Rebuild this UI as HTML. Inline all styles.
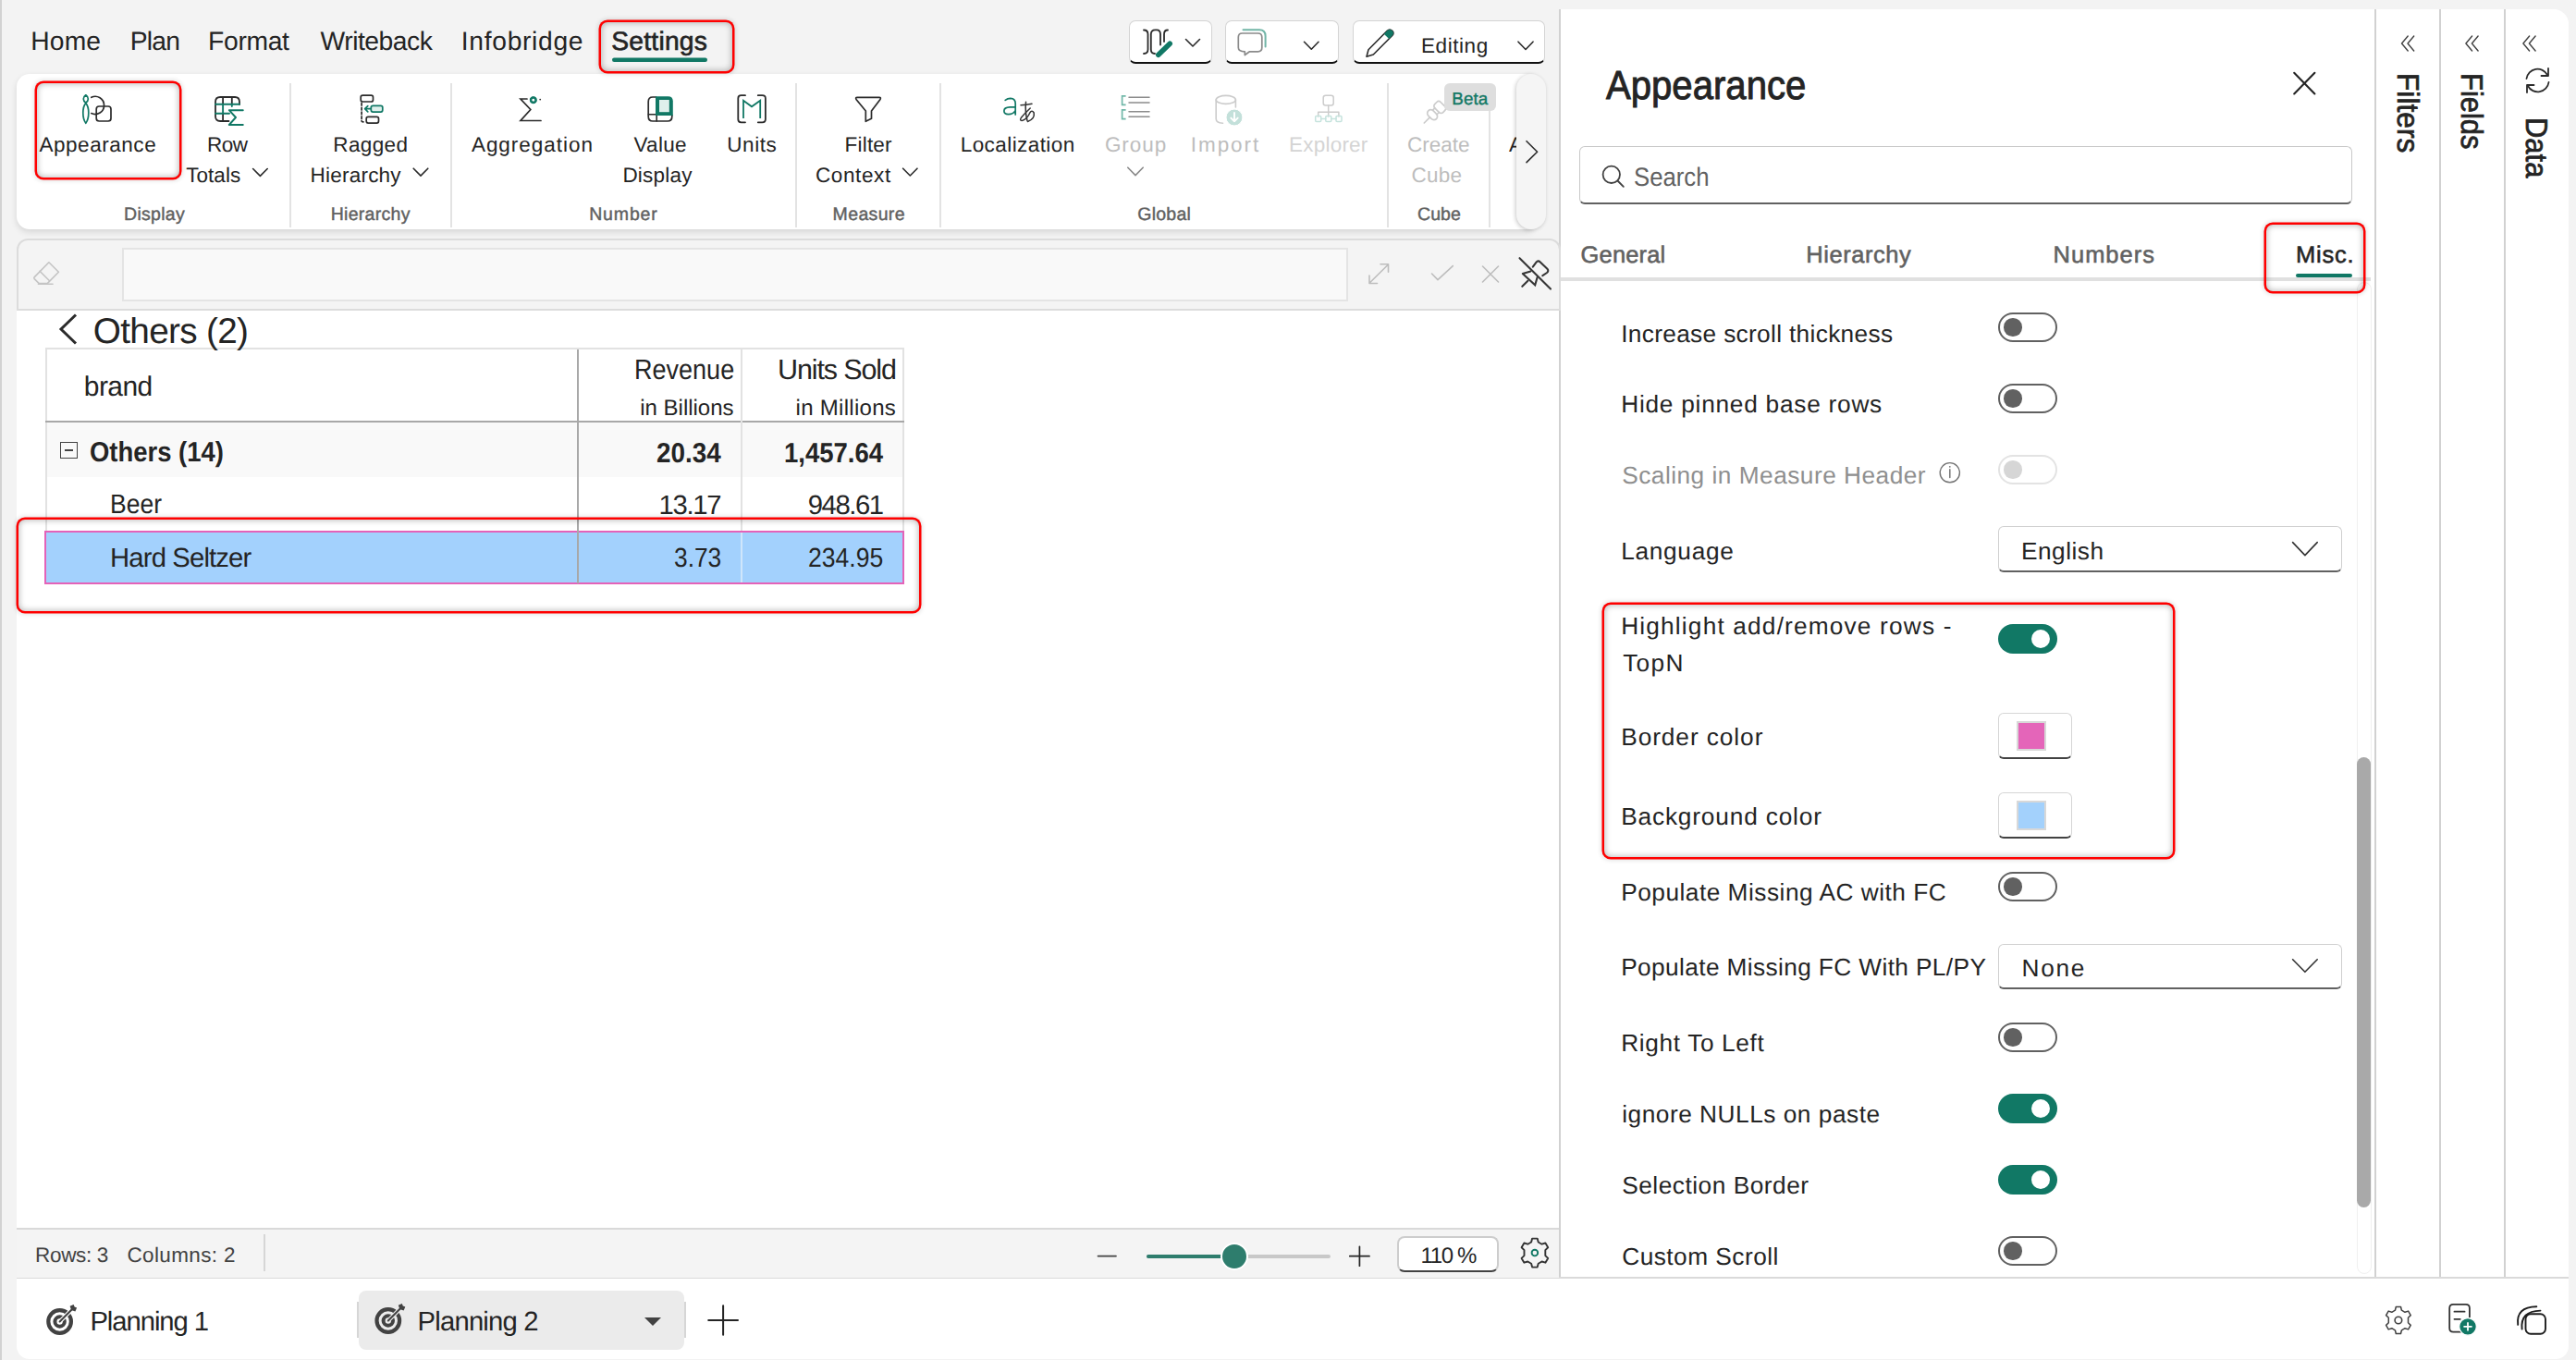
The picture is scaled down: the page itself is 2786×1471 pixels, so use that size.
<!DOCTYPE html>
<html><head><meta charset="utf-8"><style>
html,body{margin:0;padding:0;}
body{width:2786px;height:1471px;overflow:hidden;position:relative;background:#f3f3f3;font-family:"Liberation Sans",sans-serif;color:#242424;}
.a{position:absolute;box-sizing:border-box;}
.t{position:absolute;white-space:nowrap;line-height:1;text-rendering:geometricPrecision;}
</style></head><body>
<!-- window frame -->
<div class="a" style="left:0;top:0;width:2px;height:1471px;background:#d2d2d2"></div>
<!-- right panel bg -->
<div class="a" style="left:1686px;top:10px;width:1092px;height:1373px;background:#fff;border-top-right-radius:16px;border-left:2px solid #d1d1d1"></div>
<div class="a" style="left:2568px;top:10px;width:2px;height:1373px;background:#d1d1d1"></div>
<div class="a" style="left:2638px;top:10px;width:2px;height:1373px;background:#d1d1d1"></div>
<div class="a" style="left:2708px;top:10px;width:2px;height:1373px;background:#d1d1d1"></div>
<!-- bottom tab bar -->
<div class="a" style="left:18px;top:1381px;width:2760px;height:89px;background:#fff;border-top:2px solid #dadada;border-bottom-left-radius:14px;border-bottom-right-radius:14px"></div>
<!-- ribbon -->
<div class="a" style="left:18px;top:80px;width:1638px;height:168px;background:#fff;border-radius:14px 0 0 14px;box-shadow:0 3px 7px rgba(0,0,0,0.12)"></div>
<div class="a" style="left:1640px;top:80px;width:32px;height:168px;background:#f5f5f5;border-radius:16px;box-shadow:-1px 1px 4px rgba(0,0,0,0.22);z-index:5"></div>
<div class="a" style="left:313px;top:90px;width:2px;height:156px;background:#e3e3e3"></div>
<div class="a" style="left:487px;top:90px;width:2px;height:156px;background:#e3e3e3"></div>
<div class="a" style="left:860px;top:90px;width:2px;height:156px;background:#e3e3e3"></div>
<div class="a" style="left:1016px;top:90px;width:2px;height:156px;background:#e3e3e3"></div>
<div class="a" style="left:1500px;top:90px;width:2px;height:156px;background:#e3e3e3"></div>
<div class="a" style="left:1610px;top:90px;width:2px;height:156px;background:#e3e3e3"></div>
<div class="a" style="left:1562px;top:90px;width:56px;height:30px;background:#dedede;border-radius:6px;z-index:7"></div>
<!-- top buttons -->
<div class="a" style="left:1221px;top:22px;width:90px;height:47px;background:#fff;border:1.5px solid #d4d4d4;border-bottom:2.5px solid #111;border-radius:7px"></div>
<div class="a" style="left:1325px;top:22px;width:123px;height:47px;background:#fff;border:1.5px solid #d4d4d4;border-bottom:2.5px solid #111;border-radius:7px"></div>
<div class="a" style="left:1463px;top:22px;width:208px;height:47px;background:#fff;border:1.5px solid #d4d4d4;border-bottom:2.5px solid #111;border-radius:7px"></div>
<!-- formula bar -->
<div class="a" style="left:18px;top:258px;width:1670px;height:78px;background:#f4f4f4;border:2px solid #dcdcdc;border-radius:12px 12px 0 0"></div>
<div class="a" style="left:132px;top:268px;width:1326px;height:58px;background:#f9f9f9;border:2px solid #e4e4e4"></div>
<!-- grid area -->
<div class="a" style="left:18px;top:336px;width:1668px;height:992px;background:#fff"></div>
<!-- table -->
<div class="a" style="left:49px;top:376px;width:929px;height:2px;background:#e2e2e2"></div>
<div class="a" style="left:49px;top:376px;width:2px;height:198px;background:#e2e2e2"></div>
<div class="a" style="left:976px;top:376px;width:2px;height:198px;background:#e2e2e2"></div>
<div class="a" style="left:49px;top:455px;width:929px;height:2px;background:#a8a8a8"></div>
<div class="a" style="left:51px;top:457px;width:925px;height:59px;background:#f9f9f9"></div>
<div class="a" style="left:801px;top:378px;width:2px;height:253px;background:#e2e2e2"></div>
<div class="a" style="left:48px;top:574px;width:930px;height:58px;background:#a3d1fd;border:2px solid #e462b8"></div>
<div class="a" style="left:801px;top:576px;width:2px;height:54px;background:#cfe6fb"></div>
<div class="a" style="left:624px;top:378px;width:2px;height:253px;background:#a8a8a8"></div>
<div class="a" style="left:65px;top:478px;width:19px;height:18px;border:1.5px solid #424242"></div>
<div class="a" style="left:70px;top:486px;width:9px;height:1.5px;background:#424242"></div>
<!-- status bar -->
<div class="a" style="left:18px;top:1328px;width:1668px;height:54px;background:#f4f4f4;border-top:2px solid #d9d9d9"></div>
<div class="a" style="left:285px;top:1335px;width:2px;height:40px;background:#d6d6d6"></div>
<div class="a" style="left:1240px;top:1357px;width:199px;height:4px;background:#c8c8c8;border-radius:2px"></div>
<div class="a" style="left:1240px;top:1357px;width:95px;height:4px;background:#2e7d6d;border-radius:2px"></div>
<div class="a" style="left:1319.7px;top:1343.6px;width:30px;height:30px;background:#2e7d6d;border:2px solid #fff;border-radius:50%"></div>
<div class="a" style="left:1511px;top:1336.5px;width:110px;height:39.5px;background:#fff;border:2px solid #cdcdcd;border-bottom:2px solid #424242;border-radius:8px"></div>
<!-- bottom tabs -->
<div class="a" style="left:386px;top:1408px;width:2px;height:39px;background:#d6d6d6"></div>
<div class="a" style="left:740px;top:1408px;width:2px;height:39px;background:#d6d6d6"></div>
<div class="a" style="left:388px;top:1396px;width:352px;height:64px;background:#ebebeb;border-radius:8px"></div>
<!-- right panel content -->
<div class="a" style="left:1708px;top:158px;width:836px;height:63px;background:#fff;border:1.5px solid #c8c8c8;border-bottom:2px solid #616161;border-radius:6px"></div>
<div class="a" style="left:1688px;top:300px;width:876px;height:4px;background:#e0e0e0"></div>
<div class="a" style="left:2483px;top:296px;width:61px;height:4px;background:#117865;border-radius:2px"></div>
<!-- scrollbar -->
<div class="a" style="left:2549px;top:305px;width:16px;height:1073px;border:1px solid #f0f0f0;border-radius:8px"></div>
<div class="a" style="left:2549px;top:818.7px;width:15px;height:487px;background:#a9a9a9;border-radius:7.5px"></div>
<!-- toggles -->
<div class="a" style="left:2161px;top:338px;width:64px;height:32px;border:2px solid #616161;border-radius:16px"></div>
<div class="a" style="left:2167.3px;top:344.3px;width:19.4px;height:19.4px;background:#616161;border-radius:50%"></div>
<div class="a" style="left:2161px;top:415px;width:64px;height:32px;border:2px solid #616161;border-radius:16px"></div>
<div class="a" style="left:2167.3px;top:421.3px;width:19.4px;height:19.4px;background:#616161;border-radius:50%"></div>
<div class="a" style="left:2161px;top:492px;width:64px;height:32px;border:2px solid #e3e3e3;border-radius:16px"></div>
<div class="a" style="left:2167.3px;top:498.3px;width:19.4px;height:19.4px;background:#d6d6d6;border-radius:50%"></div>
<div class="a" style="left:2161px;top:675px;width:64px;height:32px;background:#117865;border-radius:16px"></div>
<div class="a" style="left:2197px;top:681px;width:20px;height:20px;background:#fff;border-radius:50%"></div>
<div class="a" style="left:2161px;top:943px;width:64px;height:32px;border:2px solid #616161;border-radius:16px"></div>
<div class="a" style="left:2167.3px;top:949.3px;width:19.4px;height:19.4px;background:#616161;border-radius:50%"></div>
<div class="a" style="left:2161px;top:1106px;width:64px;height:32px;border:2px solid #616161;border-radius:16px"></div>
<div class="a" style="left:2167.3px;top:1112.3px;width:19.4px;height:19.4px;background:#616161;border-radius:50%"></div>
<div class="a" style="left:2161px;top:1183px;width:64px;height:32px;background:#117865;border-radius:16px"></div>
<div class="a" style="left:2197px;top:1189px;width:20px;height:20px;background:#fff;border-radius:50%"></div>
<div class="a" style="left:2161px;top:1260px;width:64px;height:32px;background:#117865;border-radius:16px"></div>
<div class="a" style="left:2197px;top:1266px;width:20px;height:20px;background:#fff;border-radius:50%"></div>
<div class="a" style="left:2161px;top:1337px;width:64px;height:32px;border:2px solid #616161;border-radius:16px"></div>
<div class="a" style="left:2167.3px;top:1343.3px;width:19.4px;height:19.4px;background:#616161;border-radius:50%"></div>
<!-- dropdowns -->
<div class="a" style="left:2161px;top:569px;width:372px;height:50px;background:#fff;border:1.5px solid #d0d0d0;border-bottom:2px solid #616161;border-radius:6px"></div>
<div class="a" style="left:2161px;top:1021px;width:372px;height:49px;background:#fff;border:1.5px solid #d0d0d0;border-bottom:2px solid #616161;border-radius:6px"></div>
<!-- color buttons -->
<div class="a" style="left:2161px;top:771px;width:80px;height:50px;background:#fff;border:1.5px solid #d6d6d6;border-bottom:2px solid #424242;border-radius:6px"></div>
<div class="a" style="left:2180.7px;top:780px;width:32.3px;height:32px;background:#e465b9;border:2px solid #d8d8d8"></div>
<div class="a" style="left:2161px;top:857px;width:80px;height:50px;background:#fff;border:1.5px solid #d6d6d6;border-bottom:2px solid #424242;border-radius:6px"></div>
<div class="a" style="left:2180.7px;top:866px;width:32.3px;height:32px;background:#a3d1fc;border:2px solid #d8d8d8"></div>
<!-- red annotation boxes -->
<div class="a" style="left:649.9px;top:23.6px;width:142.5px;height:53.5px;border-radius:7px;z-index:4;box-shadow:0 0 0 2.5px #f00,0 0 4px 3.5px rgba(0,0,0,0.10),inset 0 0 6px 1px rgba(0,0,0,0.26)"></div>
<div class="a" style="left:39.6px;top:90.3px;width:154.8px;height:102.0px;border-radius:7px;z-index:4;box-shadow:0 0 0 2.5px #f00,0 0 4px 3.5px rgba(0,0,0,0.10),inset 0 0 6px 1px rgba(0,0,0,0.26)"></div>
<div class="a" style="left:20.0px;top:561.5px;width:974.2px;height:99.8px;border-radius:7px;z-index:4;box-shadow:0 0 0 2.5px #f00,0 0 4px 3.5px rgba(0,0,0,0.10),inset 0 0 6px 1px rgba(0,0,0,0.26)"></div>
<div class="a" style="left:2450.5px;top:243.4px;width:105.4px;height:71.7px;border-radius:7px;z-index:4;box-shadow:0 0 0 2.5px #f00,0 0 4px 3.5px rgba(0,0,0,0.10),inset 0 0 6px 1px rgba(0,0,0,0.26)"></div>
<div class="a" style="left:1735.1px;top:654.0px;width:615.4px;height:272.9px;border-radius:7px;z-index:4;box-shadow:0 0 0 2.5px #f00,0 0 4px 3.5px rgba(0,0,0,0.10),inset 0 0 6px 1px rgba(0,0,0,0.26)"></div>

<div class="t" style="left:33.2px;top:30.0px;font-size:28.25px;letter-spacing:0.18px;">Home</div>
<div class="t" style="left:140.7px;top:30.0px;font-size:28.25px;letter-spacing:-0.78px;">Plan</div>
<div class="t" style="left:225.1px;top:30.0px;font-size:28.25px;letter-spacing:-0.34px;">Format</div>
<div class="t" style="left:346.5px;top:30.0px;font-size:28.25px;letter-spacing:-0.46px;">Writeback</div>
<div class="t" style="left:498.8px;top:30.0px;font-size:28.25px;letter-spacing:0.68px;">Infobridge</div>
<div class="t" style="left:661.3px;top:30.0px;font-size:28.25px;-webkit-text-stroke:0.62px currentColor;letter-spacing:0.22px;">Settings</div>
<div class="t" style="left:1537.0px;top:39.0px;font-size:22.5px;letter-spacing:0.57px;">Editing</div>
<div class="t" style="left:42.4px;top:146.0px;font-size:22.5px;letter-spacing:0.55px;">Appearance</div>
<div class="t" style="left:224.0px;top:146.0px;font-size:22.5px;letter-spacing:-0.53px;">Row</div>
<div class="t" style="left:201.2px;top:179.0px;font-size:22.5px;letter-spacing:0.05px;">Totals</div>
<div class="t" style="left:360.3px;top:146.0px;font-size:22.5px;letter-spacing:0.36px;">Ragged</div>
<div class="t" style="left:335.5px;top:179.0px;font-size:22.5px;letter-spacing:0.23px;">Hierarchy</div>
<div class="t" style="left:509.9px;top:146.0px;font-size:22.5px;letter-spacing:0.98px;">Aggregation</div>
<div class="t" style="left:685.5px;top:146.0px;font-size:22.5px;letter-spacing:0.28px;">Value</div>
<div class="t" style="left:673.4px;top:179.0px;font-size:22.5px;letter-spacing:0.23px;">Display</div>
<div class="t" style="left:786.2px;top:146.0px;font-size:22.5px;letter-spacing:0.60px;">Units</div>
<div class="t" style="left:913.6px;top:146.0px;font-size:22.5px;letter-spacing:0.18px;">Filter</div>
<div class="t" style="left:881.9px;top:179.0px;font-size:22.5px;letter-spacing:0.63px;">Context</div>
<div class="t" style="left:1038.7px;top:146.0px;font-size:22.5px;letter-spacing:0.43px;">Localization</div>
<div class="t" style="left:1194.9px;top:146.0px;font-size:22.5px;color:#bdbdbd;letter-spacing:0.94px;">Group</div>
<div class="t" style="left:1287.8px;top:146.0px;font-size:22.5px;color:#bdbdbd;letter-spacing:1.94px;">Import</div>
<div class="t" style="left:1394.0px;top:146.0px;font-size:22.5px;color:#d4d4d4;letter-spacing:0.22px;">Explorer</div>
<div class="t" style="left:1522.0px;top:146.0px;font-size:22.5px;color:#bdbdbd;">Create</div>
<div class="t" style="left:1526.6px;top:179.0px;font-size:22.5px;color:#bdbdbd;letter-spacing:0.24px;">Cube</div>
<div class="t" style="left:1632.0px;top:146.0px;font-size:22.5px;">A</div>
<div class="t" style="left:134.0px;top:223.0px;font-size:19.5px;-webkit-text-stroke:0.43px currentColor;color:#616161;letter-spacing:0.30px;">Display</div>
<div class="t" style="left:357.7px;top:223.0px;font-size:19.5px;-webkit-text-stroke:0.43px currentColor;color:#616161;letter-spacing:0.29px;">Hierarchy</div>
<div class="t" style="left:637.2px;top:223.0px;font-size:19.5px;-webkit-text-stroke:0.43px currentColor;color:#616161;letter-spacing:0.85px;">Number</div>
<div class="t" style="left:900.6px;top:223.0px;font-size:19.5px;-webkit-text-stroke:0.43px currentColor;color:#616161;letter-spacing:0.35px;">Measure</div>
<div class="t" style="left:1230.3px;top:223.0px;font-size:19.5px;-webkit-text-stroke:0.43px currentColor;color:#616161;letter-spacing:0.23px;">Global</div>
<div class="t" style="left:1533.0px;top:223.0px;font-size:19.5px;-webkit-text-stroke:0.43px currentColor;color:#616161;letter-spacing:0.08px;">Cube</div>
<div class="t" style="left:1570.3px;top:98.0px;font-size:18.75px;-webkit-text-stroke:0.41px currentColor;color:#117865;letter-spacing:0.09px;z-index:8;">Beta</div>
<div class="t" style="left:100.8px;top:340.0px;font-size:38.75px;letter-spacing:-0.70px;">Others (2)</div>
<div class="t" style="left:90.8px;top:404.0px;font-size:30.0px;letter-spacing:-0.59px;">brand</div>
<div class="t" style="left:685.9px;top:385.0px;font-size:30.5px;transform-origin:0 0;transform:scaleX(0.886);">Revenue</div>
<div class="t" style="left:692.2px;top:430.0px;font-size:24.0px;">in Billions</div>
<div class="t" style="left:841.0px;top:385.0px;font-size:30.5px;letter-spacing:-1.12px;">Units Sold</div>
<div class="t" style="left:860.6px;top:430.0px;font-size:24.0px;letter-spacing:0.28px;">in Millions</div>
<div class="t" style="left:97.3px;top:475.0px;font-size:30.25px;font-weight:700;transform-origin:0 0;transform:scaleX(0.907);">Others (14)</div>
<div class="t" style="left:710.1px;top:476.0px;font-size:30.0px;font-weight:700;transform-origin:0 0;transform:scaleX(0.929);">20.34</div>
<div class="t" style="left:848.3px;top:476.0px;font-size:30.0px;font-weight:700;transform-origin:0 0;transform:scaleX(0.917);">1,457.64</div>
<div class="t" style="left:119.3px;top:532.0px;font-size:29.25px;transform-origin:0 0;transform:scaleX(0.906);">Beer</div>
<div class="t" style="left:712.6px;top:533.0px;font-size:29.25px;letter-spacing:-1.31px;">13.17</div>
<div class="t" style="left:873.8px;top:533.0px;font-size:29.25px;letter-spacing:-1.44px;">948.61</div>
<div class="t" style="left:119.1px;top:590.0px;font-size:29.25px;letter-spacing:-0.86px;">Hard Seltzer</div>
<div class="t" style="left:728.8px;top:590.0px;font-size:29.25px;transform-origin:0 0;transform:scaleX(0.900);">3.73</div>
<div class="t" style="left:873.9px;top:590.0px;font-size:29.25px;transform-origin:0 0;transform:scaleX(0.907);">234.95</div>
<div class="t" style="left:38.1px;top:1347.0px;font-size:22.5px;color:#424242;letter-spacing:-0.34px;">Rows: 3</div>
<div class="t" style="left:137.5px;top:1347.0px;font-size:22.5px;color:#424242;letter-spacing:0.36px;">Columns: 2</div>
<div class="t" style="left:1536.6px;top:1347.0px;font-size:24.0px;letter-spacing:-1.38px;">110 %</div>
<div class="t" style="left:97.4px;top:1416.0px;font-size:29.25px;letter-spacing:-1.06px;">Planning 1</div>
<div class="t" style="left:451.5px;top:1416.0px;font-size:29.25px;letter-spacing:-0.79px;">Planning 2</div>
<div class="t" style="left:1736.5px;top:72.0px;font-size:43.5px;-webkit-text-stroke:0.96px currentColor;transform-origin:0 0;transform:scaleX(0.922);">Appearance</div>
<div class="t" style="left:1766.6px;top:177.0px;font-size:28.25px;color:#616161;transform-origin:0 0;transform:scaleX(0.911);">Search</div>
<div class="t" style="left:1709.6px;top:264.0px;font-size:25.5px;-webkit-text-stroke:0.56px currentColor;color:#616161;letter-spacing:0.14px;">General</div>
<div class="t" style="left:1953.3px;top:264.0px;font-size:25.5px;-webkit-text-stroke:0.56px currentColor;color:#616161;letter-spacing:0.54px;">Hierarchy</div>
<div class="t" style="left:2220.6px;top:264.0px;font-size:25.5px;-webkit-text-stroke:0.56px currentColor;color:#616161;letter-spacing:0.98px;">Numbers</div>
<div class="t" style="left:2482.9px;top:264.0px;font-size:25.5px;-webkit-text-stroke:0.56px currentColor;letter-spacing:0.80px;">Misc.</div>
<div class="t" style="left:1753.2px;top:348.0px;font-size:26.25px;letter-spacing:0.33px;">Increase scroll thickness</div>
<div class="t" style="left:1753.2px;top:424.0px;font-size:26.25px;letter-spacing:0.75px;">Hide pinned base rows</div>
<div class="t" style="left:1754.2px;top:501.0px;font-size:26.25px;color:#8f8f8f;letter-spacing:0.49px;">Scaling in Measure Header</div>
<div class="t" style="left:1753.2px;top:583.0px;font-size:26.25px;letter-spacing:0.69px;">Language</div>
<div class="t" style="left:1753.2px;top:664.0px;font-size:26.25px;letter-spacing:1.17px;">Highlight add/remove rows -</div>
<div class="t" style="left:1755.2px;top:704.0px;font-size:26.25px;letter-spacing:1.29px;">TopN</div>
<div class="t" style="left:1753.2px;top:784.0px;font-size:26.25px;letter-spacing:0.93px;">Border color</div>
<div class="t" style="left:1753.2px;top:870.0px;font-size:26.25px;letter-spacing:0.83px;">Background color</div>
<div class="t" style="left:1753.2px;top:952.0px;font-size:26.25px;letter-spacing:0.50px;">Populate Missing AC with FC</div>
<div class="t" style="left:1753.2px;top:1033.0px;font-size:26.25px;letter-spacing:0.38px;">Populate Missing FC With PL/PY</div>
<div class="t" style="left:1753.2px;top:1115.0px;font-size:26.25px;letter-spacing:0.64px;">Right To Left</div>
<div class="t" style="left:1754.2px;top:1192.0px;font-size:26.25px;letter-spacing:0.52px;">ignore NULLs on paste</div>
<div class="t" style="left:1754.2px;top:1269.0px;font-size:26.25px;letter-spacing:0.52px;">Selection Border</div>
<div class="t" style="left:1754.2px;top:1346.0px;font-size:26.25px;letter-spacing:0.49px;">Custom Scroll</div>
<div class="t" style="left:2186.0px;top:583.0px;font-size:26.25px;letter-spacing:0.48px;">English</div>
<div class="t" style="left:2186.5px;top:1034.0px;font-size:26.25px;letter-spacing:1.68px;">None</div>
<div class="t" style="left:2620.2px;top:78.8px;font-size:33.14px;-webkit-text-stroke:0.73px currentColor;transform-origin:0 0;transform:rotate(90deg) scaleX(0.957);">Filters</div>
<div class="t" style="left:2689.2px;top:79.0px;font-size:33.14px;-webkit-text-stroke:0.73px currentColor;transform-origin:0 0;transform:rotate(90deg) scaleX(0.934);">Fields</div>
<div class="t" style="left:2758.7px;top:126.7px;font-size:33.14px;-webkit-text-stroke:0.73px currentColor;transform-origin:0 0;transform:rotate(90deg) scaleX(0.934);">Data</div>
<svg class="a" style="left:0;top:0;z-index:6" width="2786" height="1471" viewBox="0 0 2786 1471" fill="none" stroke-linecap="round" stroke-linejoin="round">
<!-- settings underline -->
<rect x="662" y="62.5" width="103" height="4.5" rx="2.2" fill="#117865" stroke="none"/>
<!-- top button 1: column edit -->
<g stroke="#2b2b2b" stroke-width="1.8">
 <path d="M1237,32.5 Q1241.5,32.5 1241.5,37 V53.5 Q1241.5,58 1237,58"/>
 <path d="M1249,58 Q1244.8,58 1244.8,53.5 V37 Q1244.8,32.3 1249.5,32.3 H1251 Q1255,32.3 1255,37 V48.5"/>
 <path d="M1263,32.5 Q1259,32.5 1259,37 V45"/>
 <path d="M1282.5,42.5 L1290,50 L1297.5,42.5" stroke-width="1.6"/>
</g>
<path d="M1252.8,59.2 L1265.2,47.3" stroke="#117865" stroke-width="5.6"/>
<!-- top button 2: comments -->
<path d="M1344.5,32.3 H1362 Q1368.6,32.3 1368.6,39 V50.5" stroke="#72b5a7" stroke-width="2"/>
<path d="M1343.5,36 H1360.5 Q1364.8,36 1364.8,40.3 V51.5 Q1364.8,55.8 1360.5,55.8 H1351.5 L1346.3,59.5 V55.8 Q1339.3,55.8 1339.3,51.5 V40.3 Q1339.3,36 1343.5,36 Z" stroke="#8a8a8a" stroke-width="1.7"/>
<path d="M1410.5,45.3 L1418.3,53.2 L1426,45.3" stroke="#2b2b2b" stroke-width="1.6"/>
<!-- top button 3: pencil -->
<path d="M1478,61.3 L1480,53.8 L1500.3,33.3 Q1503,30.8 1505.7,33.3 Q1508.2,36 1505.7,38.5 L1485.3,59 Z" stroke="#2b2b2b" stroke-width="1.6"/>
<path d="M1500.3,33.3 Q1503,30.8 1505.7,33.3 Q1508.2,36 1505.7,38.5 L1502.2,42 L1496.8,36.7 Z" fill="#117865" stroke="none"/>
<path d="M1642,45.2 L1650,53.5 L1658,45.2" stroke="#2b2b2b" stroke-width="1.6"/>

<!-- Appearance icon -->
<g stroke="#117865" stroke-width="1.7">
 <path d="M92.8,102.8 C96.2,105.2 96.2,108.8 92.8,111.2 C89.4,108.8 89.4,105.2 92.8,102.8 Z"/>
 <path d="M92.8,111.6 C96.8,116 96.8,128 92.8,133.3 C88.8,128 88.8,116 92.8,111.6 Z"/>
</g>
<g stroke="#2b2b2b" stroke-width="1.7">
 <path d="M98.8,105.3 A9.6,9.6 0 1 1 98.8,122.6"/>
 <rect x="104.2" y="115" width="15.8" height="16" rx="3"/>
</g>
<!-- Row totals icon -->
<g stroke="#2b2b2b" stroke-width="1.8">
 <path d="M247.5,131 H238.2 Q233,131 233,125.8 V110.2 Q233,105 238.2,105 H253.8 Q259,105 259,110.2 V113"/>
 <path d="M241.1,105 V112.5 M241.1,123 V131 M250.8,105 V112.5"/>
</g>
<g stroke="#117865" stroke-width="1.9">
 <path d="M233,112.7 H259 M233,122.8 H248 M241.1,112.7 V122.8 M250.8,112.7 V115"/>
 <path d="M262.8,119.2 H247.8 L255,127 L247.8,135 H262.8"/>
</g>
<!-- Ragged hierarchy icon -->
<g stroke="#2b2b2b" stroke-width="1.7">
 <rect x="390.2" y="103.2" width="13.3" height="6.8" rx="2"/>
 <rect x="396.2" y="126.3" width="13.3" height="6.8" rx="2"/>
 <path d="M391.1,111.5 V131 Q391.3,132 395,132" stroke-dasharray="2.6,2.2"/>
</g>
<g stroke="#117865" stroke-width="1.7">
 <rect x="401.3" y="114.3" width="12.5" height="6.8" rx="2" fill="#dff0ec"/>
 <path d="M394.8,117.7 H401 M397.8,114.6 L394.6,117.7 L397.8,120.8"/>
</g>
<!-- Aggregation icon -->
<path d="M570,107 H563 L573.8,118.5 L563,130.5 H585" stroke="#2b2b2b" stroke-width="1.7" stroke-linejoin="miter"/>
<circle cx="576.8" cy="108.2" r="2.7" stroke="#117865" stroke-width="2.6" stroke-dasharray="1.6,1.2"/>
<circle cx="576.8" cy="108.2" r="2.9" stroke="#117865" stroke-width="1.4"/>
<circle cx="584.2" cy="107.6" r="0.9" fill="#2b2b2b" stroke="none"/>
<!-- Value display icon -->
<path d="M709.5,105 H706 Q701.2,105 701.2,110 V126 Q701.2,131 706,131 H722 Q726.8,131 726.8,126 V124.5" stroke="#2b2b2b" stroke-width="1.7"/>
<path d="M701.3,123.8 H709.5 M710.2,124.8 V131" stroke="#2b2b2b" stroke-width="1.6"/>
<path d="M709,104.2 H722.5 Q727.8,104.2 727.8,109.5 V124.9 H709 Z" fill="#117865" stroke="none"/>
<rect x="713" y="108" width="10.8" height="13.2" fill="#dff0ec" stroke="none"/>
<!-- Units icon -->
<g stroke="#2b2b2b" stroke-width="1.8">
 <path d="M806,103.2 H801.6 Q798.3,103.2 798.3,106.5 V129 Q798.3,132.3 801.6,132.3 H806"/>
 <path d="M819.8,103.2 H824.4 Q827.9,103.2 827.9,106.5 V129 Q827.9,132.3 824.4,132.3 H819.8"/>
</g>
<path d="M804,128 V108.8 L813,115.3 L822.2,108.8 V128" stroke="#117865" stroke-width="1.8" stroke-linecap="butt" stroke-linejoin="miter"/>
<!-- Filter icon -->
<path d="M927.2,105.3 H950.8 Q953.3,105.3 951.8,107.8 L942.5,120 V128.3 L936.3,131.3 V120 L926.2,107.8 Q924.7,105.3 927.2,105.3 Z" stroke="#2b2b2b" stroke-width="1.7"/>
<!-- Localization icon -->
<path d="M1087.2,108.4 Q1089.8,106.4 1092.8,106.4 Q1098.2,106.6 1098.2,112 V123.9 M1098.2,115.9 H1092.2 Q1085.9,116.1 1085.9,120 Q1085.9,123.6 1090.6,123.6 Q1095.8,123.6 1098.2,119.6" stroke="#117865" stroke-width="1.7"/>
<g stroke="#333" stroke-width="1.5">
 <path d="M1104,113.8 Q1110,113.5 1116,112.3"/>
 <path d="M1109.5,110.3 Q1108.5,121 1111,130.5"/>
 <path d="M1114.2,117 Q1107,124 1104.3,127.5 Q1102.3,131 1106,130.3 Q1111,128.5 1113.8,122 Q1116,118.5 1118.2,122 Q1119.5,128.5 1111.5,131.5"/>
</g>
<!-- Group icon (disabled) -->
<path d="M1217.6,103.8 H1213.6 V113.3 H1217.6 M1217.6,118.8 H1213.6 V128.7 H1217.6" stroke="#72b8a9" stroke-width="1.7" stroke-linecap="butt" stroke-linejoin="miter"/>
<path d="M1221,105.3 H1243 M1221,111.1 H1243 M1221,120.8 H1243 M1221,126.3 H1243" stroke="#8c8c8c" stroke-width="1.5"/>
<!-- Import icon -->
<g stroke="#cccccc" stroke-width="1.6">
 <ellipse cx="1325.8" cy="107.9" rx="10.6" ry="4.5"/>
 <path d="M1315.2,107.9 V128.5 Q1315.2,133 1322.5,133.3 M1336.4,107.9 V116"/>
</g>
<circle cx="1335" cy="127" r="9" fill="#c3e0da" stroke="#fff" stroke-width="1"/>
<path d="M1335,122 V131.2 M1331.3,127.6 L1335,131.2 L1338.7,127.6" stroke="#fff" stroke-width="1.9"/>
<!-- Explorer icon -->
<g stroke="#cccccc" stroke-width="1.5">
 <rect x="1431.2" y="103.3" width="11" height="10.6" rx="2.5"/>
 <path d="M1436.7,114 V126 M1425.7,126 V121.3 H1447.9 V126"/>
</g>
<g stroke="#c6e3dd" stroke-width="1.5">
 <rect x="1422.7" y="125.6" width="6" height="5.8" rx="1"/>
 <rect x="1433.8" y="125.6" width="6" height="5.8" rx="1"/>
 <rect x="1445" y="125.6" width="6" height="5.8" rx="1"/>
 <path d="M1428.7,128.5 H1433.8 M1439.8,128.5 H1445"/>
</g>
<!-- Create cube pin -->
<g transform="translate(1550.9,122.4) rotate(-45)" stroke="#cccccc" stroke-width="1.7">
 <path d="M-6.3,0 H-15"/>
 <rect x="-6.3" y="-6.2" width="7.6" height="12.4" rx="4"/>
 <path d="M1.3,-3.2 H4.5 M1.3,3.2 H4.5"/>
 <rect x="4.5" y="-6.3" width="9" height="12.6" rx="3"/>
</g>
<!-- ribbon chevrons -->
<g stroke="#2b2b2b" stroke-width="1.6">
 <path d="M273.6,182.5 L281.4,190.4 L289.2,182.5"/>
 <path d="M447.2,182.2 L455,190.1 L462.8,182.2"/>
 <path d="M976.6,182.2 L984.3,190 L992,182.2"/>
 <path d="M1651,152.7 L1662.6,164.2 L1651,175.6"/>
</g>
<path d="M1219.8,181.2 L1228,189.6 L1236.2,181.2" stroke="#8a8a8a" stroke-width="1.6"/>

<!-- formula bar icons -->
<g stroke="#c4c4c4" stroke-width="1.6">
 <path d="M52.9,283.8 L63.4,294.2 L51.2,306.6 L42.2,306.6 L37.2,301.6 Q36.3,300.6 37.3,299.6 Z"/>
 <path d="M43,293.3 L53.3,303.5 M41.5,307.2 H57"/>
</g>
<g stroke="#bdbdbd" stroke-width="1.6">
 <path d="M1481,306.3 L1501.5,286 M1481,298 V306.5 H1489.5 M1493,285.8 H1501.5 V294.2"/>
 <path d="M1548.5,296 L1555,302.6 L1571.3,287.6"/>
 <path d="M1603.5,288 L1620.5,305 M1620.5,288 L1603.5,305"/>
</g>
<g stroke="#363636" stroke-width="2.1">
 <path d="M1643.5,279.2 L1677,312.6"/>
 <path d="M1646.3,309.8 L1652.4,303.7"/>
 <path d="M1657.8,288.6 L1661.5,283.6 Q1663.5,281.2 1665.8,283.4 L1673.4,290.8 Q1675.4,293 1673,295 L1668.3,298.2"/>
 <path d="M1646.8,296 L1655.4,293.4 M1662.6,300 L1660.2,308.3 L1646.8,296" stroke-linejoin="miter"/>
</g>
<!-- back chevron -->
<path d="M82,340.5 L66,356 L82,371.5" stroke="#2b2b2b" stroke-width="3" stroke-linecap="butt" stroke-linejoin="miter"/>

<!-- status bar -->
<path d="M1187.5,1358.6 H1207" stroke="#424242" stroke-width="1.7"/>
<path d="M1459.8,1358.7 H1481 M1470.4,1348.3 V1369.2" stroke="#242424" stroke-width="1.7"/>
<g transform="translate(1659.9,1355.1)">
 <path stroke-width="1.9" d="M-2.8,-15.5 L2.8,-15.5 L3.8,-11.6 L7.6,-9.4 L11.5,-10.6 L14.3,-5.8 L11.4,-3 L11.4,3 L14.3,5.8 L11.5,10.6 L7.6,9.4 L3.8,11.6 L2.8,15.5 L-2.8,15.5 L-3.8,11.6 L-7.6,9.4 L-11.5,10.6 L-14.3,5.8 L-11.4,3 L-11.4,-3 L-14.3,-5.8 L-11.5,-10.6 L-7.6,-9.4 L-3.8,-11.6 Z" stroke="#333"/>
 <circle r="3.3" stroke="#117865" stroke-width="1.9"/>
</g>

<!-- bottom tabs: target icons -->
<g id="tgt" transform="translate(64.6,1429.5)">
 <circle r="12.3" stroke="#424242" stroke-width="4.2"/>
 <circle r="5.2" stroke="#424242" stroke-width="4"/>
 <path d="M0,0 L13.5,-13.5" stroke="#fff" stroke-width="4.5"/>
 <path d="M0,0 L13.5,-13.5" stroke="#424242" stroke-width="2"/>
 <path d="M11,-16.8 L12.5,-12.5 L16.8,-11 L18.5,-15 L16,-16 L15,-18.5 Z" fill="#424242" stroke="none"/>
</g>
<g transform="translate(419.8,1428.5)">
 <circle r="12.3" stroke="#424242" stroke-width="4.2"/>
 <circle r="5.2" stroke="#424242" stroke-width="4"/>
 <path d="M0,0 L13.5,-13.5" stroke="#ebebeb" stroke-width="4.5"/>
 <path d="M0,0 L13.5,-13.5" stroke="#424242" stroke-width="2"/>
 <path d="M11,-16.8 L12.5,-12.5 L16.8,-11 L18.5,-15 L16,-16 L15,-18.5 Z" fill="#424242" stroke="none"/>
</g>
<path d="M697,1425 H715 L706,1434 Z" fill="#424242" stroke="none"/>
<path d="M766.2,1428 H798 M782.1,1412.3 V1443.8" stroke="#242424" stroke-width="2"/>

<!-- right panel icons -->
<circle cx="1742.8" cy="188.8" r="9.2" stroke="#424242" stroke-width="1.8"/>
<path d="M1749.5,195.5 L1755.8,201.8" stroke="#424242" stroke-width="1.9"/>
<path d="M2481.2,78.8 L2503.4,101.4 M2503.4,78.8 L2481.2,101.4" stroke="#242424" stroke-width="2.1"/>
<circle cx="2108.8" cy="511.2" r="10.6" stroke="#757575" stroke-width="1.4"/>
<path d="M2108.8,507.8 V516.5" stroke="#757575" stroke-width="1.5"/>
<circle cx="2108.8" cy="504.8" r="0.9" fill="#757575" stroke="none"/>
<path d="M2479.6,586.6 L2492.9,600.6 L2506.2,586.6" stroke="#333" stroke-width="1.6"/>
<path d="M2479.6,1037.8 L2492.9,1051.3 L2506.2,1037.8" stroke="#333" stroke-width="1.6"/>

<!-- side panes -->
<g stroke="#424242" stroke-width="1.4">
 <path d="M2604.2,39 L2597.5,47 L2604.2,55 M2610.7,39 L2604,47 L2610.7,55"/>
 <path d="M2673.6,39 L2666.9,47 L2673.6,55 M2680.1,39 L2673.4,47 L2680.1,55"/>
 <path d="M2735.6,39 L2728.9,47 L2735.6,55 M2742.1,39 L2735.4,47 L2742.1,55"/>
</g>
<g transform="translate(2744.5,87)" stroke="#2b2b2b" stroke-width="1.8">
 <path d="M-12,-2 A12,12 0 0 1 10.5,-6"/>
 <path d="M12,2 A12,12 0 0 1 -10.5,6"/>
 <path d="M11.5,-13 V-5 H4"/>
 <path d="M-11.5,13 V5 H-4"/>
</g>
<!-- bottom right icons -->
<g transform="translate(2593.9,1428)">
 <path d="M-2.6,-14.5 L2.6,-14.5 L3.5,-10.8 L7.1,-8.7 L10.7,-9.9 L13.3,-5.4 L10.6,-2.8 L10.6,2.8 L13.3,5.4 L10.7,9.9 L7.1,8.7 L3.5,10.8 L2.6,14.5 L-2.6,14.5 L-3.5,10.8 L-7.1,8.7 L-10.7,9.9 L-13.3,5.4 L-10.6,2.8 L-10.6,-2.8 L-13.3,-5.4 L-10.7,-9.9 L-7.1,-8.7 L-3.5,-10.8 Z" stroke="#424242" stroke-width="1.5"/>
 <circle r="3.8" stroke="#424242" stroke-width="1.6"/>
</g>
<g>
 <path d="M2662.5,1440.6 H2653.3 Q2649.2,1440.6 2649.2,1436.5 V1414.9 Q2649.2,1410.8 2653.3,1410.8 H2666.8 Q2670.9,1410.8 2670.9,1414.9 V1424.5" stroke="#333" stroke-width="1.8"/>
 <path d="M2654.4,1418.7 H2665.6 M2654.4,1426.8 H2660.8" stroke="#333" stroke-width="1.7"/>
 <circle cx="2669" cy="1434.9" r="9.3" fill="#117865" stroke="#fff" stroke-width="1.2"/>
 <path d="M2669,1430.3 V1439.5 M2664.4,1434.9 H2673.6" stroke="#fff" stroke-width="1.8" stroke-linecap="butt"/>
</g>
<g stroke="#1e1e1e" stroke-width="1.9">
 <rect x="2731.5" y="1421.2" width="21.5" height="21.5" rx="5.5"/>
 <path d="M2727.6,1437.5 Q2725.5,1418 2747.5,1417.6"/>
 <path d="M2723.2,1432.8 Q2721,1413.5 2743.3,1413.2"/>
</g>
</svg>

</body></html>
